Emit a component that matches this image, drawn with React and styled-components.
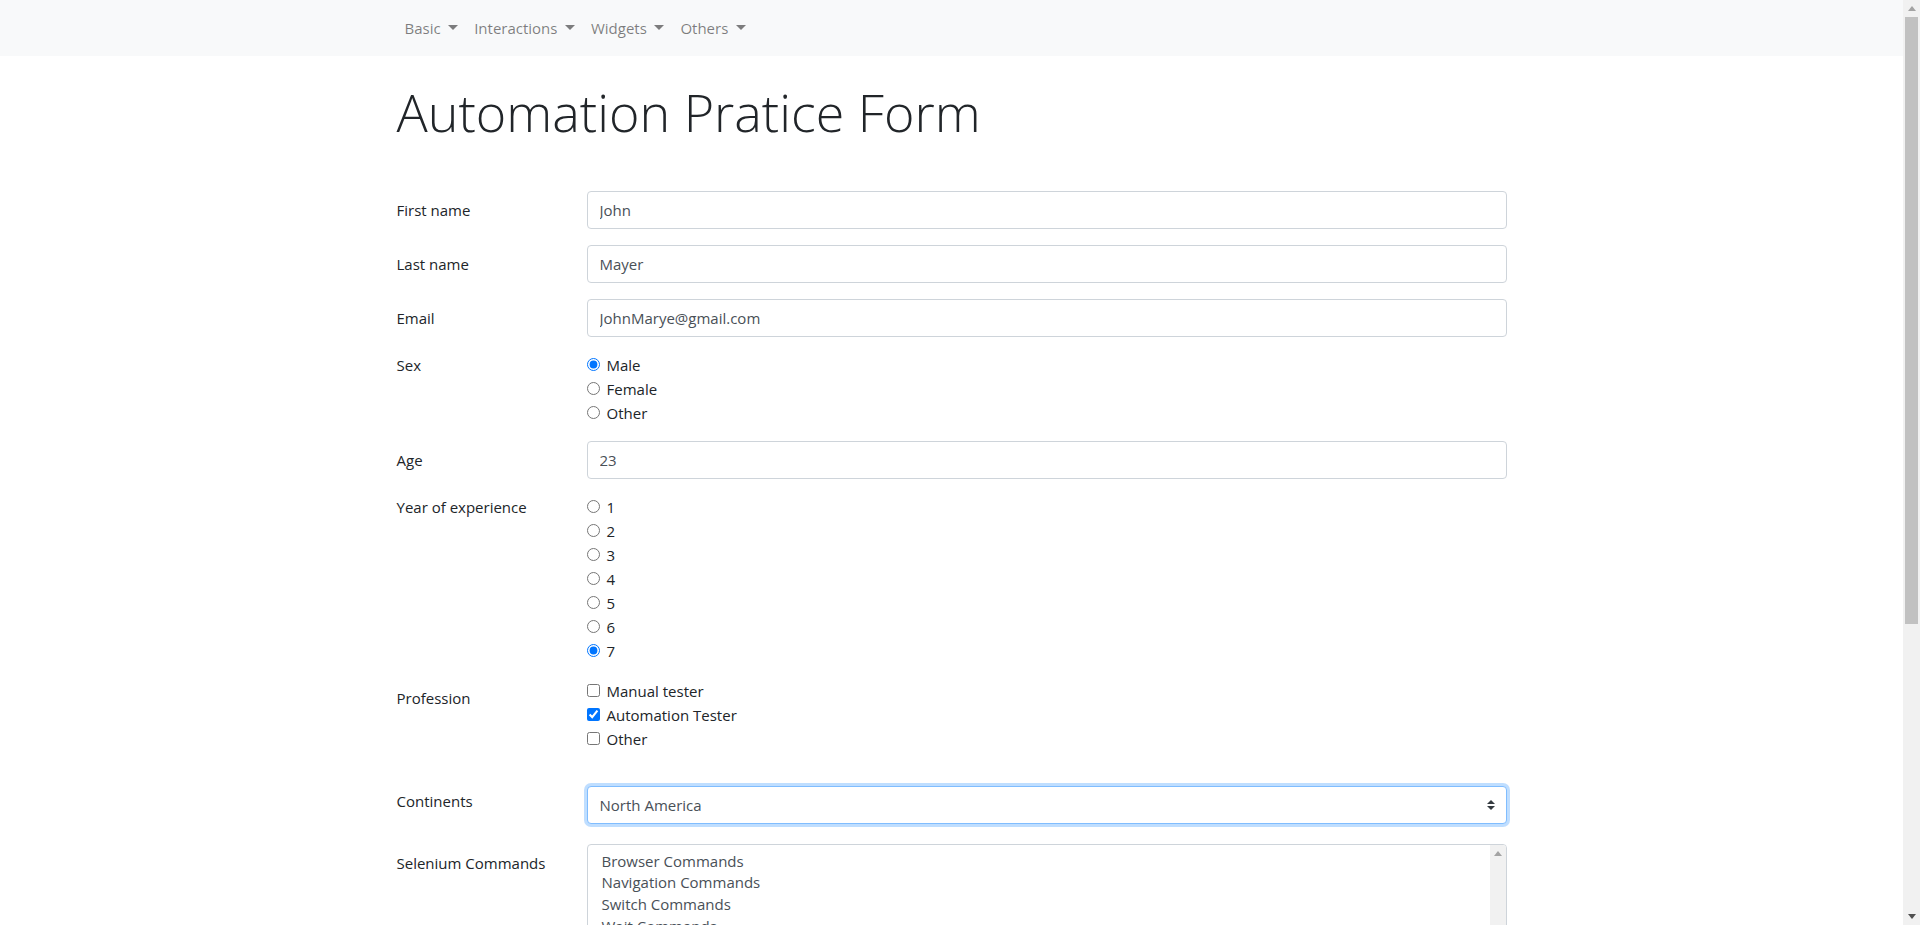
import React from "react";
import styled, { createGlobalStyle } from "styled-components";

const GlobalStyle = createGlobalStyle`
  html, body {
    height: 100%;
    overflow: hidden;
  }
  body {
    margin: 0;
    font-family: "Open Sans", "Noto Sans", "Liberation Sans", sans-serif;
    font-size: 15px;
    line-height: 24px;
    color: #212529;
    background: #fff;
  }
  *, *::before, *::after {
    box-sizing: border-box;
  }
`;

const Viewport = styled.div`
  display: flex;
  height: 100vh;
  overflow: hidden;
`;

const Page = styled.div`
  flex: 1;
  min-width: 0;
  overflow: hidden;
`;

// window scrollbar, drawn because the browser shot hides native ones
const Scrollbar = styled.div`
  flex: none;
  display: flex;
  flex-direction: column;
  align-items: center;
  width: ${(p) => p.$width || 17}px;
  background: #f1f1f1;
`;

const ScrollArrow = styled.div`
  flex: none;
  display: flex;
  align-items: center;
  justify-content: center;
  width: 100%;
  height: 17px;
  margin-top: ${(p) => (p.$end ? "auto" : 0)};
`;

const ScrollThumb = styled.div`
  flex: none;
  width: 13px;
  height: ${(p) => p.$size}px;
  background: #c1c1c1;
`;

const Navbar = styled.nav`
  background: #f8f9fa;
  height: 56px;
`;

const Container = styled.div`
  width: 1140px;
  margin: 0 auto;
  padding: 0 15px;
`;

const NavList = styled.ul`
  display: flex;
  align-items: center;
  height: 56px;
  margin: 0;
  padding: 0;
  list-style: none;
`;

const NavToggle = styled.a`
  display: block;
  padding: 8px;
  font-size: 15px;
  color: rgba(0, 0, 0, 0.5);
  text-decoration: none;
  cursor: pointer;
  &::after {
    content: "";
    display: inline-block;
    margin-left: 7.5px;
    vertical-align: 0.255em;
    border-top: 5px solid;
    border-right: 5px solid transparent;
    border-left: 5px solid transparent;
    border-bottom: 0;
  }
`;

const Title = styled.h1`
  margin: 25px 0 47.5px;
  font-size: 52px;
  font-weight: 300;
  line-height: 1.2;
  color: #212529;
`;

const FormRow = styled.div`
  display: grid;
  grid-template-columns: 160px 1fr;
  column-gap: 30px;
  margin-bottom: ${(p) => (p.$gap !== undefined ? p.$gap : 16)}px;
`;

const RowLabel = styled.label`
  padding-top: ${(p) => (p.$pad !== undefined ? p.$pad : 7)}px;
  line-height: 24px;
`;

const TextInput = styled.input`
  display: block;
  width: 100%;
  height: 38px;
  padding: 0 12px;
  font: inherit;
  color: #495057;
  background: #fff;
  border: 1px solid #ced4da;
  border-radius: 4px;
  outline: none;
`;

const Choices = styled.div`
  display: flex;
  flex-direction: column;
`;

const Choice = styled.label`
  display: flex;
  align-items: flex-start;
  gap: 7px;
  line-height: 24px;
  color: #212529;
`;

const ChoiceInput = styled.input`
  flex: none;
  width: 13px;
  height: 13px;
  margin: 5px 0 0;
`;

const SelectWrap = styled.div`
  position: relative;
`;

const Select = styled.select`
  display: block;
  width: 100%;
  height: 38px;
  padding: 0 28px 0 12px;
  font: inherit;
  color: #495057;
  background: #fff;
  border: 1px solid #80bdff;
  border-radius: 4px;
  box-shadow: 0 0 0 3px rgba(0, 123, 255, 0.25);
  appearance: none;
  outline: none;
`;

const SelectArrow = styled.svg`
  position: absolute;
  right: 12px;
  top: 14px;
  width: 8px;
  height: 10px;
  pointer-events: none;
`;

const ListBox = styled.div`
  display: flex;
  height: 130px;
  border: 1px solid #ced4da;
  border-radius: 4px;
  overflow: hidden;
  background: #fff;
`;

const ListOptions = styled.div`
  flex: 1;
  padding: 6px 12px;
`;

const ListOption = styled.div`
  padding: 0 2px;
  line-height: 21.6px;
  color: #495057;
  cursor: default;
`;

const FileRow = styled.div`
  padding-top: 7px;
  color: #212529;
`;

const Anchor = styled.a`
  display: inline-block;
  padding-top: 7px;
  color: #007bff;
  text-decoration: none;
`;

const Button = styled.button`
  padding: 6px 12px;
  font: inherit;
  color: #fff;
  background: #007bff;
  border: 1px solid #007bff;
  border-radius: 4px;
`;

const ArrowIcon = ({ down, color }) => (
  <svg width="8" height="5" viewBox="0 0 8 5">
    <path d={down ? "M0 0h8L4 5z" : "M0 5h8L4 0z"} fill={color} />
  </svg>
);

const menus = ["Basic", "Interactions", "Widgets", "Others"];
const years = ["1", "2", "3", "4", "5", "6", "7"];
const commands = [
  "Browser Commands",
  "Navigation Commands",
  "Switch Commands",
  "Wait Commands",
  "WebElement Commands",
];

const App = () => {
  return (
    <Viewport>
      <GlobalStyle />
      <Page>
        <Navbar>
          <Container>
            <NavList>
              {menus.map((m) => (
                <li key={m}>
                  <NavToggle>{m}</NavToggle>
                </li>
              ))}
            </NavList>
          </Container>
        </Navbar>
        <Container>
          <Title>Automation Pratice Form</Title>
          <form onSubmit={(e) => e.preventDefault()}>
            <FormRow>
              <RowLabel>First name</RowLabel>
              <TextInput type="text" defaultValue="John" />
            </FormRow>
            <FormRow>
              <RowLabel>Last name</RowLabel>
              <TextInput type="text" defaultValue="Mayer" />
            </FormRow>
            <FormRow>
              <RowLabel>Email</RowLabel>
              <TextInput type="email" defaultValue="JohnMarye@gmail.com" />
            </FormRow>
            <FormRow>
              <RowLabel $pad={0}>Sex</RowLabel>
              <Choices>
                {["Male", "Female", "Other"].map((s) => (
                  <Choice key={s}>
                    <ChoiceInput
                      type="radio"
                      name="sex"
                      defaultChecked={s === "Male"}
                    />
                    {s}
                  </Choice>
                ))}
              </Choices>
            </FormRow>
            <FormRow>
              <RowLabel>Age</RowLabel>
              <TextInput type="text" defaultValue="23" />
            </FormRow>
            <FormRow>
              <RowLabel $pad={0}>Year of experience</RowLabel>
              <Choices>
                {years.map((y) => (
                  <Choice key={y}>
                    <ChoiceInput
                      type="radio"
                      name="exp"
                      defaultChecked={y === "7"}
                    />
                    {y}
                  </Choice>
                ))}
              </Choices>
            </FormRow>
            <FormRow $gap={35}>
              <RowLabel>Profession</RowLabel>
              <Choices>
                {["Manual tester", "Automation Tester", "Other"].map((p) => (
                  <Choice key={p}>
                    <ChoiceInput
                      type="checkbox"
                      defaultChecked={p === "Automation Tester"}
                    />
                    {p}
                  </Choice>
                ))}
              </Choices>
            </FormRow>
            <FormRow $gap={20}>
              <RowLabel $pad={3}>Continents</RowLabel>
              <SelectWrap>
                <Select defaultValue="North America">
                  <option>Asia</option>
                  <option>Europe</option>
                  <option>Africa</option>
                  <option>Australia</option>
                  <option>South America</option>
                  <option>North America</option>
                  <option>Antartica</option>
                </Select>
                <SelectArrow viewBox="0 0 4 5">
                  <path d="M2 0L0 2h4zm0 5L0 3h4z" fill="#343a40" />
                </SelectArrow>
              </SelectWrap>
            </FormRow>
            <FormRow>
              <RowLabel>Selenium Commands</RowLabel>
              <ListBox role="listbox" aria-multiselectable="true">
                <ListOptions>
                  {commands.map((c) => (
                    <ListOption key={c} role="option">
                      {c}
                    </ListOption>
                  ))}
                </ListOptions>
                <Scrollbar $width={16}>
                  <ScrollArrow>
                    <ArrowIcon color="#a3a3a3" />
                  </ScrollArrow>
                </Scrollbar>
              </ListBox>
            </FormRow>
            <FormRow>
              <RowLabel>Upload image</RowLabel>
              <FileRow>Choose File No file chosen</FileRow>
            </FormRow>
            <FormRow>
              <RowLabel>Download file</RowLabel>
              <div>
                <Anchor href="#">Click here to Download File</Anchor>
              </div>
            </FormRow>
            <FormRow>
              <span />
              <div>
                <Button type="submit">Submit</Button>
              </div>
            </FormRow>
          </form>
        </Container>
      </Page>
      <Scrollbar>
        <ScrollArrow>
          <ArrowIcon color="#a3a3a3" />
        </ScrollArrow>
        <ScrollThumb $size={607} />
        <ScrollArrow $end>
          <ArrowIcon down color="#505050" />
        </ScrollArrow>
      </Scrollbar>
    </Viewport>
  );
};

export default App;
